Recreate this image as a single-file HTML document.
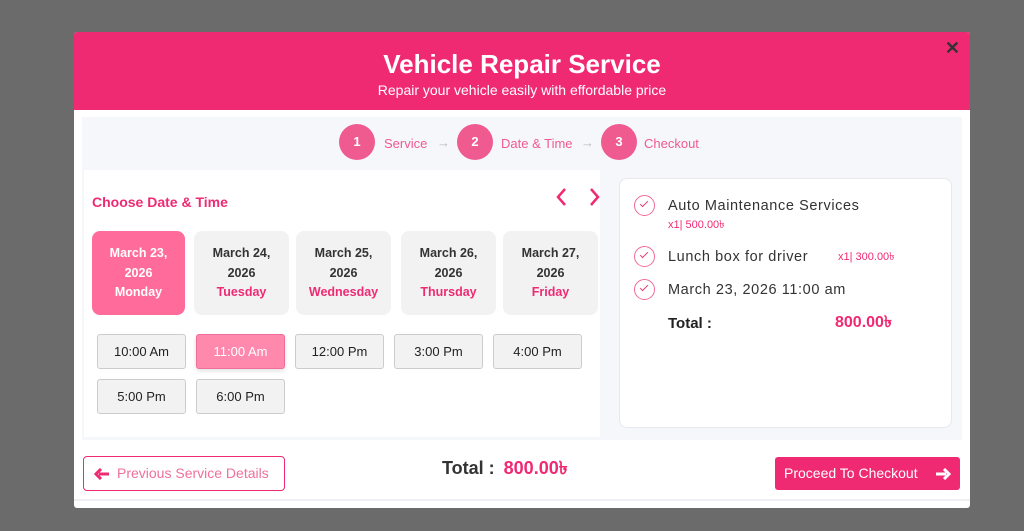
<!DOCTYPE html>
<html><head><meta charset="utf-8"><style>
*{box-sizing:border-box;margin:0;padding:0}
body{width:1024px;height:531px;background:#6b6b6b;font-family:"Liberation Sans",sans-serif;position:relative;overflow:hidden}
.a{position:absolute;line-height:1.15}
.modal{left:74px;top:32px;width:896px;height:476px;background:#fff;border-radius:3px;overflow:hidden}
.hdr{left:0;top:0;width:896px;height:78px;background:#f02a72;color:#fff;text-align:center}
.c{width:36px;height:36px;border-radius:50%;background:#ef5a8f;color:#fff;font-size:13px;font-weight:bold;text-align:center;line-height:36px}
.st{font-size:13px;color:#ef5a8f;top:137px}
.ar{font-size:13px;color:#bbb;top:136px}
.d{top:231px;height:84px;background:#f2f2f2;border-radius:8px;text-align:center;font-size:12.5px;font-weight:bold;color:#333;line-height:19.5px;padding-top:13px}
.d span{color:#f02a72}
.t{height:35px;width:89px;background:#f2f2f2;border:1px solid #ccc;border-radius:3px;text-align:center;font-size:13px;line-height:33px;color:#222}
.ck{width:21px;height:21px;border:1.5px solid #f06c99;border-radius:50%}
.ck:after{content:"";position:absolute;left:5px;top:5px;width:7px;height:3px;border-left:1.5px solid #e0407a;border-bottom:1.5px solid #e0407a;transform:rotate(-45deg)}
.it{font-size:14.5px;color:#333;letter-spacing:.6px}
.sm{font-size:11px;color:#f02a72;line-height:12px}
</style></head><body>
<div class="a modal">
 <div class="a hdr">
  <div style="font-size:26px;font-weight:bold;margin-top:17px;line-height:30px">Vehicle Repair Service</div>
  <div style="font-size:14px;margin-top:2px;line-height:18px">Repair your vehicle easily with effordable price</div>
  <div class="a" style="right:10px;top:6px;color:#333;font-size:18px;font-weight:bold">✕</div>
 </div>
 <div class="a" style="left:8px;top:85px;width:880px;height:323px;background:#f6f7fb"></div>
</div>
<div class="a c" style="left:339px;top:124px">1</div>
<div class="a st" style="left:384px">Service</div><div class="a ar" style="left:437px">→</div>
<div class="a c" style="left:457px;top:124px">2</div>
<div class="a st" style="left:501px">Date &amp; Time</div><div class="a ar" style="left:581px">→</div>
<div class="a c" style="left:601px;top:124px">3</div>
<div class="a st" style="left:644px">Checkout</div>

<div class="a" style="left:84px;top:170px;width:516px;height:267px;background:#fff"></div>
<div class="a" style="left:92px;top:194px;font-size:14px;font-weight:bold;color:#f02a72">Choose Date &amp; Time</div>
<svg class="a" style="left:553px;top:187px" width="54" height="20"><path d="M12 2 L5 10 L12 18" fill="none" stroke="#f02a72" stroke-width="2.5"/><path d="M38 2 L45 10 L38 18" fill="none" stroke="#f02a72" stroke-width="2.5"/></svg>

<div class="a d" style="left:92px;width:93px;background:#ff6b9a;color:#fff">March 23,<br>2026<br><span style="color:#fff">Monday</span></div>
<div class="a d" style="left:194px;width:95px">March 24,<br>2026<br><span>Tuesday</span></div>
<div class="a d" style="left:296px;width:95px">March 25,<br>2026<br><span>Wednesday</span></div>
<div class="a d" style="left:401px;width:95px">March 26,<br>2026<br><span>Thursday</span></div>
<div class="a d" style="left:503px;width:95px">March 27,<br>2026<br><span>Friday</span></div>

<div class="a t" style="left:97px;top:334px">10:00 Am</div>
<div class="a t" style="left:196px;top:334px;background:#ff89ad;border-color:#f06c99;color:#fff;box-shadow:0 2px 5px rgba(0,0,0,.12)">11:00 Am</div>
<div class="a t" style="left:295px;top:334px">12:00 Pm</div>
<div class="a t" style="left:394px;top:334px">3:00 Pm</div>
<div class="a t" style="left:493px;top:334px">4:00 Pm</div>
<div class="a t" style="left:97px;top:379px">5:00 Pm</div>
<div class="a t" style="left:196px;top:379px">6:00 Pm</div>

<div class="a" style="left:619px;top:178px;width:333px;height:250px;background:#fff;border:1px solid #e8e8ee;border-radius:8px"></div>
<div class="a ck" style="left:634px;top:195px"></div>
<div class="a it" style="left:668px;top:198px">Auto Maintenance Services</div>
<div class="a sm" style="left:668px;top:219px">x1| 500.00৳</div>
<div class="a ck" style="left:634px;top:246px"></div>
<div class="a it" style="left:668px;top:249px">Lunch box for driver</div>
<div class="a sm" style="left:838px;top:251px">x1| 300.00৳</div>
<div class="a ck" style="left:634px;top:279px"></div>
<div class="a it" style="left:668px;top:282px">March 23, 2026 11:00 am</div>
<div class="a" style="left:668px;top:315px;font-size:15px;font-weight:bold;color:#222;line-height:17px">Total :</div>
<div class="a" style="left:835px;top:314px;font-size:16px;font-weight:bold;color:#f02a72;line-height:18px">800.00৳</div>

<div class="a" style="left:74px;top:499px;width:896px;height:2px;background:#eef0f4"></div>
<div class="a" style="left:83px;top:456px;width:202px;height:35px;border:1px solid #f02a72;border-radius:4px;color:#f0709a;font-size:14px;line-height:33px;padding-left:33px">Previous Service Details
 <svg class="a" style="left:10px;top:11px" width="16" height="12"><path d="M15 6 H5 M7 1 L2 6 L7 11" fill="none" stroke="#f02a72" stroke-width="3"/></svg></div>
<div class="a" style="left:442px;top:458px;font-size:18px;font-weight:bold;color:#333;line-height:20px">Total : <span style="color:#f02a72;margin-left:4px">800.00৳</span></div>
<div class="a" style="left:775px;top:457px;width:185px;height:33px;background:#f02a72;border-radius:3px;color:#fff;font-size:14px;line-height:33px;padding-left:9px">Proceed To Checkout
 <svg class="a" style="left:160px;top:11px" width="16" height="12"><path d="M1 6 H11 M9 1 L14 6 L9 11" fill="none" stroke="#fff" stroke-width="3"/></svg></div>
</body></html>
